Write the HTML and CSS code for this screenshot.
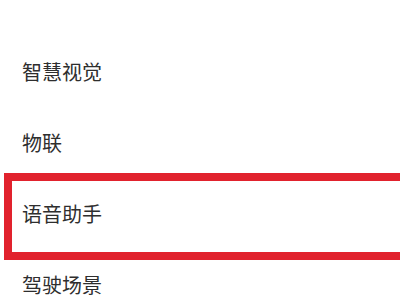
FILE: index.html
```html
<!DOCTYPE html>
<html lang="zh-CN">
<head>
<meta charset="utf-8">
<link rel="stylesheet" href="styles.css">
</head>
<body>
<ul class="menu">
  <li class="item">智慧视觉</li>
  <li class="item">物联</li>
  <li class="item item--marked">语音助手</li>
  <li class="item">驾驶场景</li>
</ul>
</body>
</html>
```
FILE: styles.css
```css
html, body {
  margin: 0;
  padding: 0;
  background: #ffffff;
  overflow: hidden;
}
body {
  width: 400px;
  height: 300px;
  font-family: "Noto Sans CJK SC", "Noto Sans", sans-serif;
}
.menu {
  list-style: none;
  margin: 0;
  padding: 36px 0 0 0;
}
.item {
  position: relative;
  height: 71px;
  display: flex;
  align-items: center;
  padding-left: 22px;
  font-size: 20px;
  color: #2e2e2e;
}
.item--marked::after {
  content: "";
  position: absolute;
  left: 4px;
  right: -12px;
  top: -5px;
  bottom: -11px;
  border: 8px solid #e1222d;
}
```
